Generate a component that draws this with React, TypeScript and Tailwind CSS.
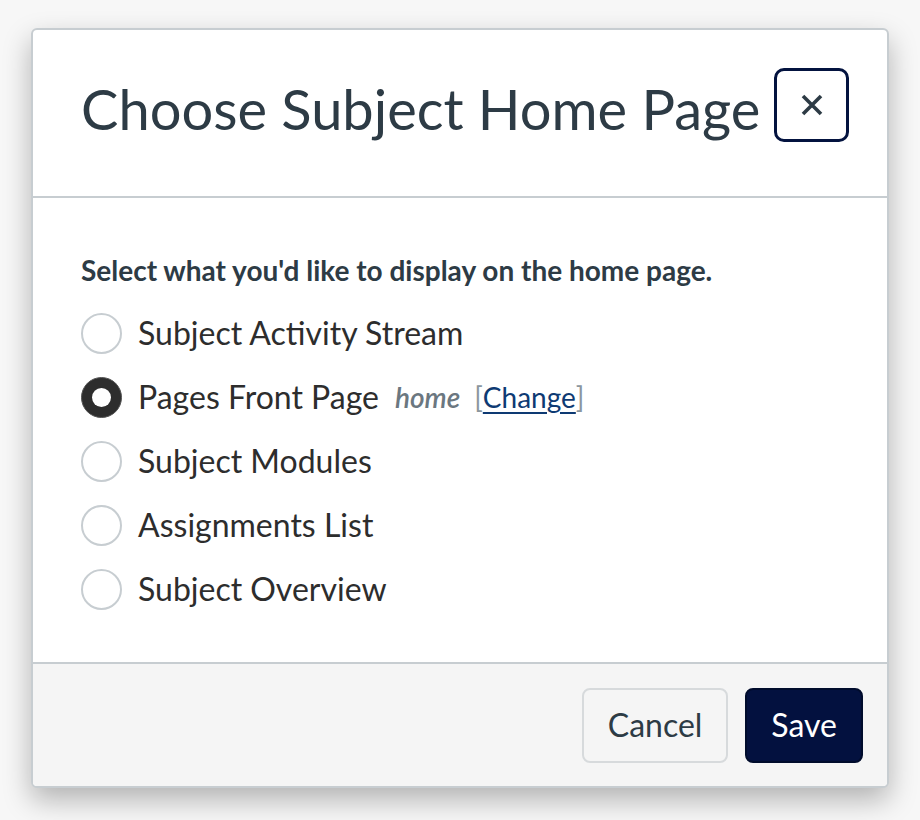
import { useState } from 'react'

const options = [
  { id: 'feed', label: 'Subject Activity Stream' },
  { id: 'wiki', label: 'Pages Front Page' },
  { id: 'modules', label: 'Subject Modules' },
  { id: 'assignments', label: 'Assignments List' },
  { id: 'syllabus', label: 'Subject Overview' },
]

function Radio({ checked }: { checked: boolean }) {
  if (checked) {
    return (
      <span className="w-[41px] h-[41px] rounded-full bg-[#2d2d2d] border border-[#555] flex items-center justify-center shrink-0">
        <span className="w-[19px] h-[19px] rounded-full bg-white" />
      </span>
    )
  }
  return <span className="w-[41px] h-[41px] rounded-full border-2 border-[#c7cdd1] bg-white shrink-0" />
}

export default function App() {
  const [selected, setSelected] = useState('wiki')

  return (
    <div
      className="min-h-[820px] bg-[#f7f7f7] pt-[28px] px-[31px]"
      style={{ fontFamily: 'Lato, "Open Sans", sans-serif' }}
    >
      <div className="w-[858px] rounded-[6px] border-2 border-[#c7cdd1] bg-white shadow-[0_12px_28px_rgba(0,0,0,0.28)] overflow-hidden">
        {/* Header */}
        <div className="h-[168px] flex items-center justify-between pl-[48px] pr-[38px] border-b-2 border-[#c7cdd1]">
          <h2 className="text-[56px] leading-none text-[#2d3b45] font-normal mb-[8px]">Choose Subject Home Page</h2>
          <button className="w-[75px] h-[74px] mb-[16px] rounded-[10px] border-[3px] border-[#03133f] flex items-center justify-center">
            <svg width="22" height="22" viewBox="0 0 22 22">
              <path d="M2 2 L20 20 M20 2 L2 20" stroke="#2d3b45" strokeWidth="3.6" />
            </svg>
          </button>
        </div>

        {/* Body */}
        <div className="h-[464px] pl-[48px] pt-[58px]">
          <p className="text-[28px] font-bold text-[#2d3b45] leading-[28px]">
            Select what you'd like to display on the home page.
          </p>
          <div className="mt-[17px] flex flex-col">
            {options.map((opt) => (
              <label
                key={opt.id}
                onClick={() => setSelected(opt.id)}
                className="h-[64px] flex items-center gap-[16px] cursor-pointer"
              >
                <Radio checked={selected === opt.id} />
                <span className="text-[32px] text-[#2d2d2d]">{opt.label}</span>
                {opt.id === 'wiki' && (
                  <span className="flex items-baseline text-[28px]">
                    <em className="font-semibold text-[#6b7780] mr-[14px]">home</em>
                    <span className="text-[#8b969e]">[</span>
                    <a href="#" className="text-[#0e3a73] underline underline-offset-[4px]">Change</a>
                    <span className="text-[#8b969e]">]</span>
                  </span>
                )}
              </label>
            ))}
          </div>
        </div>

        {/* Footer */}
        <div className="h-[124px] bg-[#f5f5f5] border-t-2 border-[#c7cdd1] flex items-center justify-end gap-[17px] pr-[24px]">
          <button className="h-[75px] px-[24px] rounded-[8px] border-2 border-[#d7dadc] bg-[#f5f5f5] text-[32px] text-[#2d3b45]">
            Cancel
          </button>
          <button className="h-[75px] px-[24px] rounded-[8px] border-2 border-[#000c2c] bg-[#03113f] text-[32px] text-white">
            Save
          </button>
        </div>
      </div>
    </div>
  )
}
